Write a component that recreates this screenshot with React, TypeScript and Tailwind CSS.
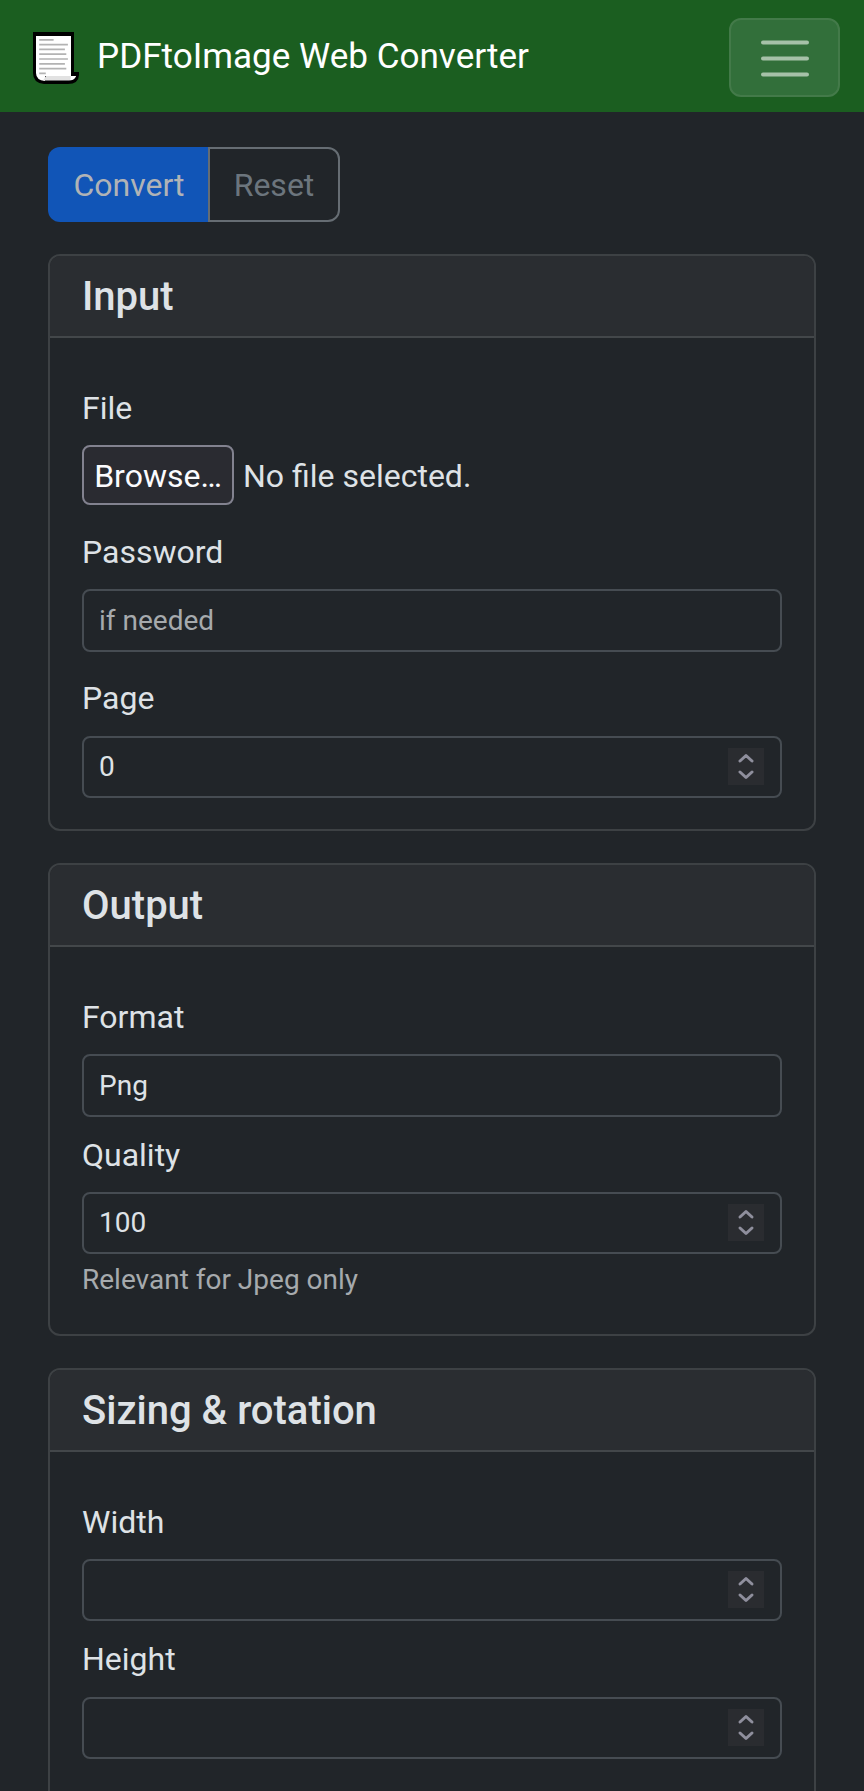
import { ReactNode } from "react";

function Logo() {
  return (
    <svg className="block h-[52px] w-[46px]" viewBox="0 0 46 52">
      <path d="M0 0H41V40H46V43Q45.500 52 35 52H11Q0 51 0 41Z" fill="#000" />
      <path d="M3 4H38V44H12V49Q3 48 3 41Z" fill="#fff" />
      <path d="M13 44H43Q41 48.500 36 48.500H10Z" fill="#e2e2e2" />
      <path d="M38 44H43Q41.500 48 37.500 48Z" fill="#fff" />
      <path
        d="M6.200 7.800H20.600M6.200 12.600H34.900M6.200 17.400H31.900M6.200 22.200H33.300M6.200 27H34.900M6.200 31.800H31.900M6.200 36.600H33.300M6.200 41.300H12.800"
        stroke="#b3b3b3"
        strokeWidth="1.7"
      />
    </svg>
  );
}

function Card({ title, className, children }: { title: string; className: string; children: ReactNode }) {
  return (
    <section className={`rounded-xl border-2 border-[#3d4144] ${className}`}>
      <h5 className="flex h-[82px] items-start rounded-t-[10px] border-b-2 border-[#43474a] bg-[#2a2d31] px-8 pt-[17px] text-[40px] leading-[48px] font-medium">
        {title}
      </h5>
      <div className="flex flex-col px-8 pt-[46px]">{children}</div>
    </section>
  );
}

function Label({ children, className = "" }: { children: ReactNode; className?: string }) {
  return <label className={`block h-12 text-[32px] leading-[48px] ${className}`}>{children}</label>;
}

function Field({ value, placeholder, className }: { value?: string; placeholder?: string; className: string }) {
  return (
    <input
      className={`block w-full rounded-lg border-2 border-[#464c52] bg-transparent px-[15px] pb-px text-[28px] placeholder:text-[#a6aaad] placeholder:opacity-100 ${className}`}
      defaultValue={value}
      placeholder={placeholder}
    />
  );
}

function NumberField({ value, className }: { value?: string; className: string }) {
  return (
    <div
      className={`flex h-[62px] items-center rounded-lg border-2 border-[#464c52] pr-4 pb-0.5 pl-[15px] ${className}`}
    >
      <input className="h-full min-w-0 flex-1 bg-transparent text-[28px]" inputMode="numeric" defaultValue={value} />
      <svg className="h-[37px] w-9 bg-[#2a2c30]" viewBox="0 0 36 37">
        <path
          d="M12 13L18 7.500L24 13M12 24L18 29.500L24 24"
          fill="none"
          stroke="#8f8f9d"
          strokeWidth="3"
          strokeLinecap="round"
          strokeLinejoin="round"
        />
      </svg>
    </div>
  );
}

export default function App() {
  return (
    <div className="h-[1791px] overflow-hidden bg-[#212529] font-[Roboto,sans-serif] text-[#dee2e6]">
      <header className="flex h-28 justify-between bg-[#1b5e20] pr-6 pl-[33px]">
        <div className="flex pt-8">
          <Logo />
          <span className="-mt-[3px] ml-[18px] text-[35.1px] leading-[54px] whitespace-nowrap text-white">
            PDFtoImage Web Converter
          </span>
        </div>
        <button
          aria-label="Toggle navigation"
          className="mt-[18px] flex h-[79px] w-[111px] items-center justify-center rounded-xl border-2 border-[#437a49] bg-[#326f3a]"
        >
          <svg className="h-10 w-[50px]" viewBox="0 0 50 40">
            <path d="M3 4.500H47M3 20.500H47M3 36.500H47" stroke="#a6c1a8" strokeWidth="4" strokeLinecap="round" />
          </svg>
        </button>
      </header>
      <main className="flex flex-col px-12 pt-[35px]">
        <div className="flex h-[75px] text-[32px]">
          <button className="w-40 rounded-l-xl bg-[#1155b7] pl-0.5 text-[#b0b3b6]">Convert</button>
          <button className="w-[132px] rounded-r-xl border-2 border-[#666d73] text-[#6c757d]">Reset</button>
        </div>

        <Card title="Input" className="mt-8 h-[577px]">
          <Label>File</Label>
          <div className="mt-[13px] flex h-[60px] items-center text-[32px]">
            <button className="h-[60px] w-[152px] rounded-lg border-2 border-[#82828f] bg-[#2a2b31] pt-0.5 text-[#fbfbfe]">
              Browse…
            </button>
            <span className="ml-[9px] pt-0.5 whitespace-nowrap">No file selected.</span>
          </div>
          <Label className="mt-[23px]">Password</Label>
          <Field placeholder="if needed" className="mt-[13px] h-[63px]" />
          <Label className="mt-[22px]">Page</Label>
          <NumberField value="0" className="mt-[14px]" />
        </Card>

        <Card title="Output" className="mt-8 h-[473px]">
          <Label>Format</Label>
          <Field value="Png" className="mt-[13px] h-[63px]" />
          <Label className="mt-[14px]">Quality</Label>
          <NumberField value="100" className="mt-[13px]" />
          <p className="mt-[5px] text-[28px] leading-[42px] text-[#a6aaad]">Relevant for Jpeg only</p>
        </Card>

        <Card title="Sizing & rotation" className="mt-8 h-[520px]">
          <Label>Width</Label>
          <NumberField className="mt-[13px]" />
          <Label className="mt-[14px]">Height</Label>
          <NumberField className="mt-[14px]" />
        </Card>
      </main>
    </div>
  );
}
